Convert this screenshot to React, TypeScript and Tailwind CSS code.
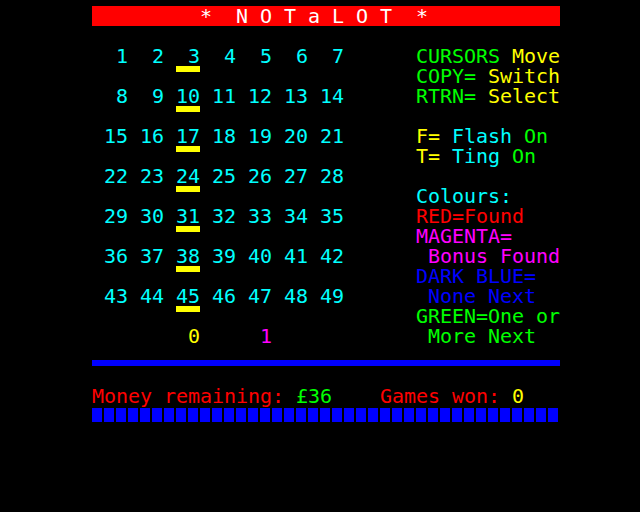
import React from "react";

const CYAN = "text-[#00ffff]";
const YELLOW = "text-[#ffff00]";
const GREEN = "text-[#00ff00]";
const RED = "text-[#ff0000]";
const MAGENTA = "text-[#ff00ff]";
const BLUE = "text-[#0000ff]";

type Seg = { t: string; c?: string } | { u: true };

function T({ t, c }: { t: string; c?: string }) {
  return <span className={`whitespace-pre ${c ?? ""}`}>{t}</span>;
}

function Under() {
  return (
    <span className="flex flex-col w-[24px] h-[20px] shrink-0">
      <span className="block h-[6px] bg-[#ffff00]" />
    </span>
  );
}

function Row({ segs }: { segs: Seg[] }) {
  return (
    <div className="flex h-[20px] w-[480px]">
      {segs.map((s, i) =>
        "u" in s ? <Under key={i} /> : <T key={i} t={s.t} c={s.c} />
      )}
    </div>
  );
}

function nums(start: number) {
  let s = " ";
  for (let i = 0; i < 7; i++) s += String(start + i).padStart(3, " ");
  return s.padEnd(28, " ");
}

const underLeft: Seg[] = [{ t: "        " }, { u: true }, { t: "                  " }];

export default function App() {
  const rows: Seg[][] = [
    [],
    [],
    [{ t: nums(1), c: CYAN }, { t: "CURSORS", c: GREEN }, { t: " Move", c: YELLOW }],
    [...underLeft, { t: "COPY=", c: GREEN }, { t: " Switch", c: YELLOW }],
    [{ t: nums(8), c: CYAN }, { t: "RTRN=", c: GREEN }, { t: " Select", c: YELLOW }],
    [...underLeft],
    [
      { t: nums(15), c: CYAN },
      { t: "F=", c: YELLOW },
      { t: " Flash", c: CYAN },
      { t: " On", c: GREEN },
    ],
    [...underLeft, { t: "T=", c: YELLOW }, { t: " Ting", c: CYAN }, { t: " On", c: GREEN }],
    [{ t: nums(22), c: CYAN }],
    [...underLeft, { t: "Colours:", c: CYAN }],
    [{ t: nums(29), c: CYAN }, { t: "RED=Found", c: RED }],
    [...underLeft, { t: "MAGENTA=", c: MAGENTA }],
    [{ t: nums(36), c: CYAN }, { t: " Bonus Found", c: MAGENTA }],
    [...underLeft, { t: "DARK BLUE=", c: BLUE }],
    [{ t: nums(43), c: CYAN }, { t: " None Next", c: BLUE }],
    [...underLeft, { t: "GREEN=One or", c: GREEN }],
    [
      { t: "         " },
      { t: "0", c: YELLOW },
      { t: "     " },
      { t: "1", c: MAGENTA },
      { t: "            " },
      { t: " More Next", c: GREEN },
    ],
  ];

  return (
    <div className="w-[640px] h-[512px] bg-black overflow-hidden font-['DejaVu_Sans_Mono',monospace] text-[20px] leading-[20px] tracking-[-0.041px] text-white">
      <div className="flex flex-col pl-[80px] pt-[6px]">
        {/* title */}
        <div className="flex h-[20px] w-[480px]">
          <span className="w-[12px] shrink-0" />
          <span className="flex-1 bg-[#ff0000] whitespace-pre text-white">
            {"         *  N O T a L O T  *"}
          </span>
        </div>
        {rows.slice(1).map((r, i) => (
          <Row key={i} segs={r} />
        ))}
        {/* row 17: blue line */}
        <div className="flex flex-col justify-end h-[20px] w-[480px] pl-[12px]">
          <div className="h-[6px] bg-[#0000ff]" />
        </div>
        {/* row 18 */}
        <div className="h-[20px]" />
        {/* row 19 */}
        <Row
          segs={[
            { t: " Money remaining:", c: RED },
            { t: " £36", c: GREEN },
            { t: "    Games won:", c: RED },
            { t: " 0", c: YELLOW },
          ]}
        />
        {/* row 20: separated blocks */}
        <div className="flex h-[20px] w-[480px] pl-[12px] pt-[2px]">
          {Array.from({ length: 39 }).map((_, i) => (
            <div key={i} className="w-[12px] h-[14px] shrink-0 pr-[2px]">
              <div className="h-full bg-[#0000ff]" />
            </div>
          ))}
        </div>
      </div>
    </div>
  );
}
